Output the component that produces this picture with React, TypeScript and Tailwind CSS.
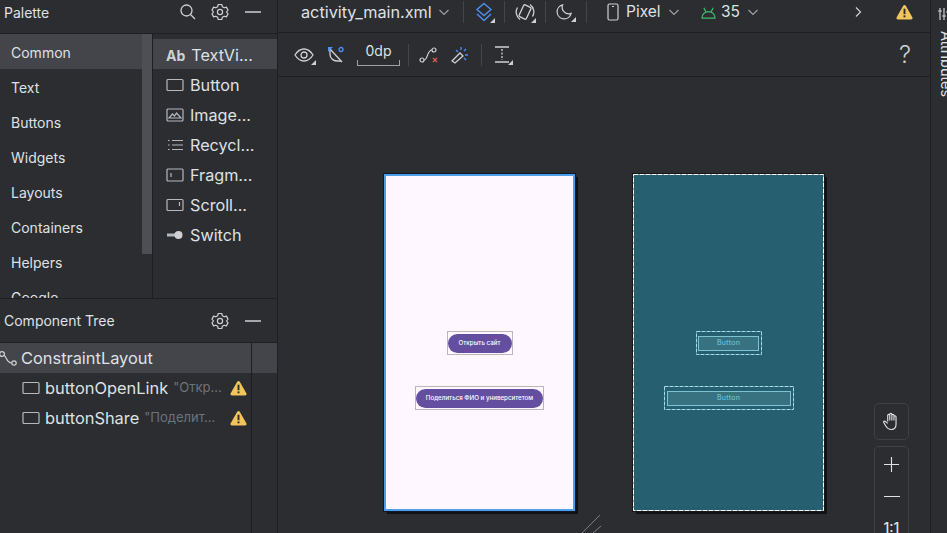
import React from 'react';

type IconProps = { className?: string };

const Gear = ({ className = 'w-[18px] h-[18px]' }: IconProps) => (
  <svg viewBox="0 0 18 18" className={className} fill="none" stroke="#ced0d6" strokeWidth="1.2">
    <path d="M7.2 1.5h3.6l.5 2.2 1.9 1.1 2.200-.7 1.600 3L15.500 9l1.500 1.900-1.600 3-2.200-.7-1.900 1.100-.5 2.200H7.200l-.5-2.200-1.900-1.100-2.200.7-1.600-3L2.500 9 1 7.100l1.600-3 2.200.7 1.900-1.100z" strokeLinejoin="round" />
    <circle cx="9" cy="9" r="2.6" />
  </svg>
);

const Minus = () => <div className="w-4 h-[2px] bg-[#a3a6ad]" />;

const Warn = ({ className = 'w-[17px] h-[16px]' }: IconProps) => (
  <svg viewBox="0 0 16 15" className={className}>
    <path d="M8 .8c.5 0 .9.3 1.2.8l6.2 10.9c.5 1-.1 2-1.2 2H1.8c-1.1 0-1.7-1-1.2-2L6.8 1.600C7.100 1.100 7.500.8 8 .8z" fill="#f2c55c" />
    <rect x="7.1" y="4.4" width="1.8" height="5.2" fill="#2b2d30" />
    <rect x="7.1" y="10.7" width="1.8" height="1.8" fill="#2b2d30" />
  </svg>
);

const Chevron = () => (
  <svg viewBox="0 0 12 12" className="w-3 h-3" fill="none" stroke="#9da0a8" strokeWidth="1.2">
    <path d="M1.500 4l4.500 4.500L10.500 4" />
  </svg>
);

const Corner = () => <span className="absolute right-0 bottom-0 w-0 h-0 border-l-[5px] border-l-transparent border-b-[5px] border-b-[#ced0d6]" />;

const ButtonGlyph = () => (
  <svg viewBox="0 0 18 14" className="w-[18px] h-[14px]" fill="none" stroke="#b4b8bf" strokeWidth="1.2">
    <rect x="1" y="1.5" width="16" height="11" rx="1" />
  </svg>
);

// fine dashed outline that the layout editor draws over blueprint views
const DashedRect = ({ w, h, color, dash }: { w: number; h: number; color: string; dash: string }) => (
  <svg width={w} height={h} className="absolute left-0 top-0" fill="none">
    <rect x="0.5" y="0.5" width={w - 1} height={h - 1} stroke={color} strokeDasharray={dash} />
  </svg>
);

const paletteIcons: Record<string, React.ReactNode> = {
  Button: <ButtonGlyph />,
  'Image...': (
    <svg viewBox="0 0 18 14" className="w-[18px] h-[14px]" fill="none" stroke="#b4b8bf" strokeWidth="1.2">
      <rect x="1" y="1" width="16" height="12" rx="1" />
      <path d="M3 10l3.500-4 2 2 2-3 4.500 5z" />
    </svg>
  ),
  'Recycl...': (
    <svg viewBox="0 0 18 14" className="w-[18px] h-[14px]" fill="none" stroke="#b4b8bf" strokeWidth="1.2">
      <path d="M6 2.500h11M6 7h11M6 11.500h11M2 2.500h1.600M2 7h1.600M2 11.500h1.600" />
    </svg>
  ),
  'Fragm...': (
    <svg viewBox="0 0 18 14" className="w-[18px] h-[14px]" fill="none" stroke="#b4b8bf" strokeWidth="1.2">
      <rect x="1" y="1" width="16" height="12" rx="1" />
      <path d="M5 5v4" />
    </svg>
  ),
  'Scroll...': (
    <svg viewBox="0 0 18 14" className="w-[18px] h-[14px]" fill="none" stroke="#b4b8bf" strokeWidth="1.2">
      <rect x="1" y="1.500" width="16" height="11" rx="1" />
      <path d="M13.500 4v4" />
    </svg>
  ),
  Switch: (
    <svg viewBox="0 0 18 14" className="w-[18px] h-[14px]">
      <rect x="1" y="5.500" width="10" height="3" fill="#b4b8bf" />
      <circle cx="12.500" cy="7" r="4" fill="#ced0d6" />
    </svg>
  ),
};

const categories = ['Common', 'Text', 'Buttons', 'Widgets', 'Layouts', 'Containers', 'Helpers', 'Google'];
const paletteItems = ['Button', 'Image...', 'Recycl...', 'Fragm...', 'Scroll...', 'Switch'];

const VSep = () => <div className="w-px h-[22px] bg-[#43454a] shrink-0" />;

const TreeRow = ({ name, hint }: { name: string; hint: string }) => (
  <div className="h-[30px] flex items-center pl-[22px] pr-[4px]">
    <ButtonGlyph />
    <span className="ml-[5px] text-[16.4px] text-[#dfe1e5] whitespace-nowrap">{name}</span>
    <span className="ml-[5px] text-[13px] text-[#6f737a] whitespace-nowrap">{hint}</span>
    <span className="ml-auto flex"><Warn /></span>
  </div>
);

const LightDevice = () => (
  <div className="w-[191px] h-[337px] shrink-0 bg-[#fef7ff] border-2 border-[#4f9ee8] shadow-[0_0_0_1px_#10182a,3px_3px_0_#111215] flex flex-col items-center pt-[155px]">
    <div className="w-[66px] h-[24px] border border-[#b9b6bc] flex items-center justify-center">
      <div className="w-[64px] h-[19px] rounded-full bg-[#634ea0] text-white text-[6.2px] font-medium flex items-center justify-center whitespace-nowrap">Открыть сайт</div>
    </div>
    <div className="mt-[31px] w-[129px] h-[24px] border border-[#b9b6bc] flex items-center justify-center">
      <div className="w-[127px] h-[19px] rounded-full bg-[#634ea0] text-white text-[6.2px] font-medium flex items-center justify-center whitespace-nowrap">Поделиться ФИО и университетом</div>
    </div>
  </div>
);

const BlueprintButton = ({ w, inner }: { w: number; inner: string }) => (
  <div className="relative h-[24px] flex items-center justify-center" style={{ width: w }}>
    <DashedRect w={w} h={24} color="#a4dde8" dash="4 1" />
    <div className={`${inner} h-[15px] pt-px bg-[#38717f] border border-[#7cc4d3] text-[#7fcadb] text-[7px] tracking-[0.3px] flex items-center justify-center`}>Button</div>
  </div>
);

const DarkDevice = () => (
  <div className="relative w-[191px] h-[337px] shrink-0 bg-[#265f6f] shadow-[0_0_0_1px_#16181a,3px_3px_0_#111215] flex flex-col items-center pt-[157px]">
    <DashedRect w={191} h={337} color="#ffffff" dash="5 1" />
    <BlueprintButton w={66} inner="w-[61px]" />
    <div className="h-[31px] shrink-0" />
    <BlueprintButton w={130} inner="w-[124px]" />
  </div>
);

export default function App() {
  return (
    <div className="w-[947px] h-[533px] overflow-hidden flex bg-[#2b2d30] text-[#dfe1e5] font-['Inter',sans-serif]">
      {/* left column */}
      <div className="w-[278px] shrink-0 flex flex-col border-r border-[#1e1f22]">
        <div className="h-[34px] shrink-0 flex items-center pl-[4px] pr-[16px] pb-[9px] border-b border-[#1e1f22]">
          <span className="text-[14px]">Palette</span>
          <svg viewBox="0 0 18 18" className="w-[18px] h-[18px] ml-auto" fill="none" stroke="#ced0d6" strokeWidth="1.3">
            <circle cx="7.500" cy="7.500" r="5.500" />
            <path d="M11.500 11.500L16 16" />
          </svg>
          <span className="ml-[14px] flex"><Gear /></span>
          <span className="ml-[16px] flex"><Minus /></span>
        </div>
        <div className="h-[265px] shrink-0 flex overflow-hidden border-b border-[#1e1f22]">
          <div className="w-[153px] shrink-0 flex border-r border-[#1e1f22]">
            <div className="w-[142px] shrink-0">
              {categories.map((c, i) => (
                <div key={c} className={`h-[35px] flex items-center pl-[11px] pt-[2px] text-[14px] ${i === 0 ? 'bg-[#43454a]' : ''}`}>{c}</div>
              ))}
            </div>
            <div className="w-[10px] h-[220px] bg-[#4d4f54]" />
          </div>
          <div className="flex-1 pt-[5px]">
            <div className="h-[30px] bg-[#43454a] flex items-center pl-[13px] pt-[2px] text-[16.2px]">
              <span className="text-[14px] font-bold text-[#ced0d6]">Ab</span>
              <span className="ml-[6px]">TextVi...</span>
            </div>
            {paletteItems.map((p) => (
              <div key={p} className="h-[30px] flex items-center pl-[13px] pt-[2px] text-[16.2px] whitespace-nowrap">
                <span className="flex w-[18px]">{paletteIcons[p]}</span>
                <span className="ml-[6px]">{p}</span>
              </div>
            ))}
          </div>
        </div>
        <div className="h-[44px] shrink-0 flex items-center pl-[4px] pr-[16px] border-b border-[#1e1f22]">
          <span className="text-[14px]">Component Tree</span>
          <span className="ml-auto flex"><Gear /></span>
          <span className="ml-[16px] flex"><Minus /></span>
        </div>
        <div className="flex-1 flex">
          <div className="w-[252px] shrink-0 border-r border-[#1e1f22]">
            <div className="h-[30px] bg-[#43454a] flex items-center text-[16.4px] pl-[21px] relative">
              <svg viewBox="0 0 18 16" className="w-[18px] h-[16px] absolute -left-[1px] top-[7px]" fill="none" stroke="#ced0d6" strokeWidth="1.2">
                <circle cx="3" cy="4" r="2.400" />
                <circle cx="15" cy="13" r="2.200" />
                <path d="M5 5.500c3 1 2 7.500 7.800 7.500" />
              </svg>
              ConstraintLayout
            </div>
            <TreeRow name="buttonOpenLink" hint={'"Откр...'} />
            <TreeRow name="buttonShare" hint={'"Поделит...'} />
          </div>
          <div className="flex-1"><div className="h-[30px] bg-[#43454a]" /></div>
        </div>
      </div>

      {/* center */}
      <div className="w-[652px] shrink-0 flex flex-col">
        <div className="h-[33px] shrink-0 flex items-center pl-[23px] pb-[8px] border-b border-[#1e1f22] whitespace-nowrap">
          <span className="w-[131px] text-[16.25px] text-[#dfe1e5]">activity_main.xml</span>
          <span className="ml-[6px] flex"><Chevron /></span>
          <div className="ml-[13px]"><VSep /></div>
          <span className="relative ml-[10px] w-[21px] h-[21px] flex">
            <svg viewBox="0 0 20 20" className="w-[20px] h-[20px]" fill="none" stroke="#4e8ff0" strokeWidth="1.4">
              <path d="M10 1.500l7 6-7 6-7-6z" />
              <path d="M3 12l7 6.500 7-6.500" />
            </svg>
            <Corner />
          </span>
          <div className="ml-[9px]"><VSep /></div>
          <span className="relative ml-[10px] w-[21px] h-[21px] flex">
            <svg viewBox="0 0 20 20" className="w-[20px] h-[20px]" fill="none" stroke="#ced0d6" strokeWidth="1.3">
              <rect x="6" y="3.500" width="8" height="13" rx="1.200" transform="rotate(25 10 10)" />
              <path d="M2.500 5.500A9 9 0 0 0 5 17.500M17.500 14.500A9 9 0 0 0 15 2.500" />
            </svg>
            <Corner />
          </span>
          <div className="ml-[9px]"><VSep /></div>
          <span className="relative ml-[10px] w-[20px] h-[19px] flex">
            <svg viewBox="0 0 18 18" className="w-[17px] h-[17px]" fill="none" stroke="#ced0d6" strokeWidth="1.3">
              <path d="M7 2a7.500 7.500 0 1 0 9 9 7 7 0 0 1-9-9z" />
            </svg>
            <Corner />
          </span>
          <div className="ml-[10px]"><VSep /></div>
          <span className="ml-[20px] flex">
            <svg viewBox="0 0 12 18" className="w-[12px] h-[18px]" fill="none" stroke="#ced0d6" strokeWidth="1.2">
              <rect x="1" y="1" width="10" height="16" rx="1.500" />
              <path d="M5 3.500h2" />
            </svg>
          </span>
          <span className="ml-[7px] w-[34px] text-[15.5px]">Pixel</span>
          <span className="ml-[8px] flex"><Chevron /></span>
          <span className="ml-[20px] flex">
            <svg viewBox="0 0 18 14" className="w-[17px] h-[13px]" fill="none" stroke="#3dba6d" strokeWidth="1.300">
              <path d="M2 13c0-4 3-7 7-7s7 3 7 7zM4 2l2 4M14 2l-2 4" />
            </svg>
          </span>
          <span className="ml-[4px] w-[18px] text-[15.5px]">35</span>
          <span className="ml-[8px] flex"><Chevron /></span>
          <span className="ml-[93px] flex">
            <svg viewBox="0 0 12 12" className="w-3 h-3" fill="none" stroke="#ced0d6" strokeWidth="1.2"><path d="M4 1.500l4.500 4.500-4.500 4.500" /></svg>
          </span>
          <span className="ml-[32px] flex"><Warn /></span>
        </div>

        <div className="h-[44px] shrink-0 flex items-center pl-[16px] border-b border-[#1e1f22] whitespace-nowrap">
          <span className="relative w-[22px] h-[20px] flex items-center">
            <svg viewBox="0 0 20 14" className="w-[20px] h-[14px]" fill="none" stroke="#ced0d6" strokeWidth="1.3">
              <path d="M1 7c2.500-4 5.500-6 9-6s6.500 2 9 6c-2.500 4-5.500 6-9 6s-6.500-2-9-6z" />
              <circle cx="10" cy="7" r="3" />
            </svg>
            <Corner />
          </span>
          <span className="ml-[11px] flex">
            <svg viewBox="0 0 18 18" className="w-[18px] h-[18px]" fill="none" strokeWidth="1.3">
              <path d="M3 3v5c0 4 3 7 7 7h4" stroke="#ced0d6" />
              <path d="M3 3l12 13" stroke="#ced0d6" />
              <circle cx="14" cy="3.500" r="2" stroke="#4e8ff0" />
              <path d="M1 1h5l-5 5z" fill="#4e8ff0" />
            </svg>
          </span>
          <div className="ml-[12px] w-[43px] flex flex-col items-center">
            <span className="text-[14px] leading-none">0dp</span>
            <div className="mt-[2px] w-full h-[6px] border-b border-x border-[#9da0a8]" />
          </div>
          <div className="ml-[8px]"><VSep /></div>
          <span className="ml-[10px] flex">
            <svg viewBox="0 0 20 18" className="w-[20px] h-[18px]" fill="none" stroke="#ced0d6" strokeWidth="1.2">
              <circle cx="3" cy="14" r="2" />
              <circle cx="15" cy="4" r="2" />
              <path d="M5 14c4 0 3-10 8-10" />
              <path d="M14 12l4 4M18 12l-4 4" stroke="#e05555" strokeWidth="1.400" />
            </svg>
          </span>
          <span className="ml-[12px] flex">
            <svg viewBox="0 0 20 18" className="w-[20px] h-[18px]" fill="none" strokeWidth="1.300">
              <path d="M1 15l8-8 3 3-8 7z" stroke="#ced0d6" />
              <path d="M10 1v3M17 9h-3M15 3l-2 2M5 4l2 2M15 14l-2-2" stroke="#4e8ff0" />
            </svg>
          </span>
          <div className="ml-[10px]"><VSep /></div>
          <span className="relative ml-[9px] w-[22px] h-[20px] flex justify-center">
            <svg viewBox="0 0 16 20" className="w-[16px] h-[20px]" fill="none" stroke="#ced0d6" strokeWidth="1.300">
              <path d="M1 2h14M1 17h14" />
              <path d="M8 4v11" strokeDasharray="2 1.500" />
            </svg>
            <Corner />
          </span>
          <span className="ml-auto mr-[19px] text-[24px] font-light leading-none text-[#ced0d6]">?</span>
        </div>

        <div className="flex-1 relative flex pl-[106px] pt-[97px] gap-[58px]">
          <LightDevice />
          <DarkDevice />
          <svg viewBox="0 0 24 20" className="absolute left-[302px] top-[437px] w-[24px] h-[20px]" fill="none" stroke="#7a7d84" strokeWidth="1">
            <path d="M2 19L20 1M13 19L21 12" />
          </svg>
          <div className="absolute left-[596px] top-[326px] w-[35px] h-[37px] border border-[#3f4145] rounded-[5px] flex items-center justify-center">
            <svg viewBox="0 0 18 20" className="w-[17px] h-[19px]" fill="none" stroke="#dfe1e5" strokeWidth="1.2" strokeLinejoin="round">
              <path d="M5 10V3.500a1.100 1.100 0 0 1 2.200 0V9m0-6.500a1.100 1.100 0 0 1 2.200 0V9m0-5.500a1.100 1.100 0 0 1 2.200 0V9m0-4a1.100 1.100 0 0 1 2.200 0v8c0 3.500-2 5.500-5 5.500-3 0-4.500-1.500-6-4l-2-3.500c-.6-1 .8-2 1.700-1L5 12" />
            </svg>
          </div>
          <div className="absolute left-[596px] top-[369px] w-[35px] h-[100px] border border-[#3f4145] rounded-[5px] flex flex-col items-center">
            <svg viewBox="0 0 18 18" className="mt-[9px] w-[17px] h-[17px] shrink-0" fill="none" stroke="#dfe1e5" strokeWidth="1.2"><path d="M9 1v16M1 9h16" /></svg>
            <div className="mt-[23px] w-[16px] h-px bg-[#dfe1e5] shrink-0" />
            <span className="mt-[24px] text-[14px] font-medium leading-none">1:1</span>
          </div>
        </div>
      </div>

      {/* attributes strip */}
      <div className="flex-1 border-l border-[#1e1f22] flex flex-col items-start pl-[7px] pt-[8px] overflow-hidden">
        <svg viewBox="0 0 12 12" className="w-[12px] h-[12px] shrink-0" fill="none" stroke="#ced0d6" strokeWidth="1.2">
          <path d="M2 0v12M6 0v12M10 0v12M0 3h4M4 8h4M8 4h4" />
        </svg>
        <span className="mt-[11px] text-[14.5px] leading-none [writing-mode:vertical-rl] whitespace-nowrap">Attributes</span>
      </div>
    </div>
  );
}
